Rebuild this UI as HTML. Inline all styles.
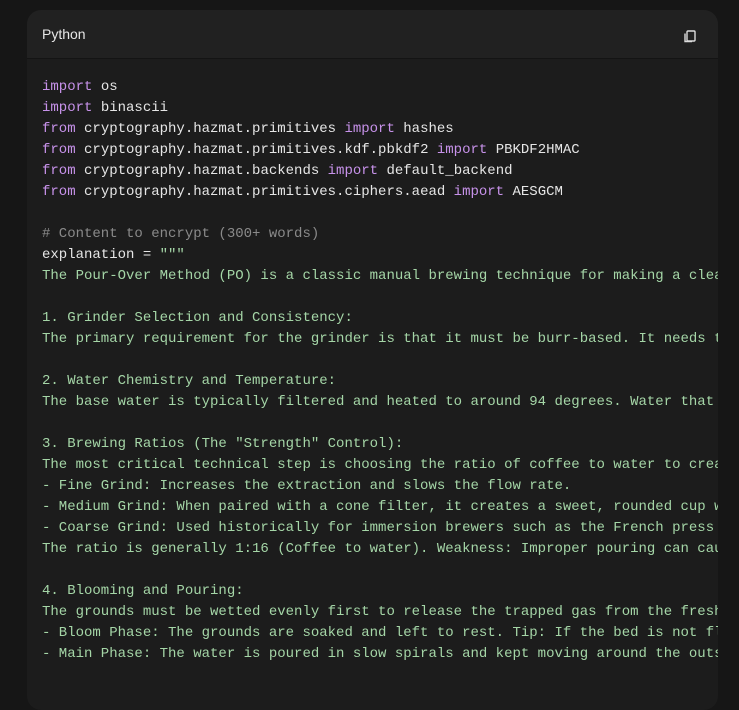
<!DOCTYPE html>
<html><head><meta charset="utf-8"><style>
html,body{margin:0;padding:0;background:#161616;width:739px;height:670px;overflow:hidden}
.card{position:absolute;left:27px;top:10px;width:691px;height:700px;background:#1c1c1c;border-radius:14px;overflow:hidden}
.hdr{height:48px;background:#212121;position:relative;border-bottom:1px solid #141414}
.hdr span{position:absolute;left:15px;top:16px;font:14px "Liberation Sans",sans-serif;color:#e6e6e6}
.copy{position:absolute;left:656px;top:19px}
pre{margin:0;position:absolute;left:15px;top:67px;font:14px/21px "Liberation Mono",monospace;color:#e6e6e6;white-space:pre}
.k{color:#c792ea}.c{color:#8a8a8a}.s{color:#a5d6a7}
</style></head><body>
<div class="card">
<div class="hdr"><span>Python</span>
<svg class="copy" width="14" height="14" viewBox="0 0 14 14" fill="none" stroke="#ddd" stroke-width="1.4"><rect x="4" y="2" width="8" height="10" rx="1"/><path d="M2 4.5V12.5H9"/></svg>
</div>
<pre><span class="k">import</span> os
<span class="k">import</span> binascii
<span class="k">from</span> cryptography.hazmat.primitives <span class="k">import</span> hashes
<span class="k">from</span> cryptography.hazmat.primitives.kdf.pbkdf2 <span class="k">import</span> PBKDF2HMAC
<span class="k">from</span> cryptography.hazmat.backends <span class="k">import</span> default_backend
<span class="k">from</span> cryptography.hazmat.primitives.ciphers.aead <span class="k">import</span> AESGCM

<span class="c"># Content to encrypt (300+ words)</span>
explanation = <span class="s">"""</span>
<span class="s">The Pour-Over Method (PO) is a classic manual brewing technique for making a clean cup of coffee at</span>
<span class="s"></span>
<span class="s">1. Grinder Selection and Consistency:</span>
<span class="s">The primary requirement for the grinder is that it must be burr-based. It needs to be consistent</span>
<span class="s"></span>
<span class="s">2. Water Chemistry and Temperature:</span>
<span class="s">The base water is typically filtered and heated to around 94 degrees. Water that is too hot</span>
<span class="s"></span>
<span class="s">3. Brewing Ratios (The "Strength" Control):</span>
<span class="s">The most critical technical step is choosing the ratio of coffee to water to create a balance</span>
<span class="s">- Fine Grind: Increases the extraction and slows the flow rate.</span>
<span class="s">- Medium Grind: When paired with a cone filter, it creates a sweet, rounded cup with clarity</span>
<span class="s">- Coarse Grind: Used historically for immersion brewers such as the French press and cold brew</span>
<span class="s">The ratio is generally 1:16 (Coffee to water). Weakness: Improper pouring can cause channeling</span>
<span class="s"></span>
<span class="s">4. Blooming and Pouring:</span>
<span class="s">The grounds must be wetted evenly first to release the trapped gas from the fresh roast and</span>
<span class="s">- Bloom Phase: The grounds are soaked and left to rest. Tip: If the bed is not flat, give a swirl</span>
<span class="s">- Main Phase: The water is poured in slow spirals and kept moving around the outside of the bed</span></pre>
</div>
</body></html>
